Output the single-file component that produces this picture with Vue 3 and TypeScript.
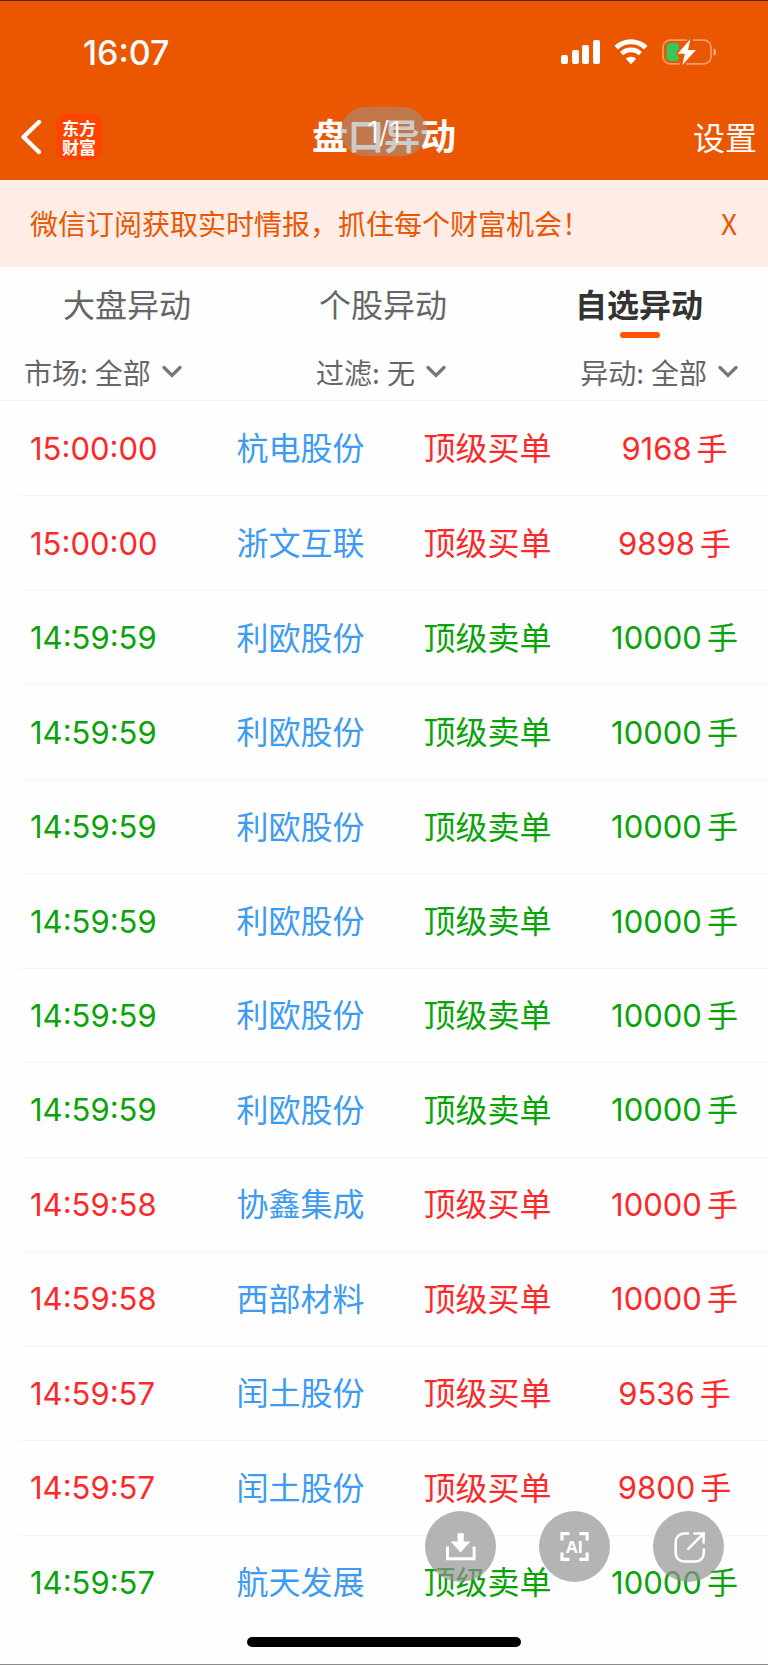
<script setup lang="ts">
import { ref } from 'vue'

type Side = 'buy' | 'sell'

interface Movement {
  time: string
  name: string
  side: Side
  volume: number
}

interface Filter {
  id: string
  label: string
  value: string
}

const tabs: string[] = ['大盘异动', '个股异动', '自选异动']
const activeTab = ref(2)
const bannerOpen = ref(true)

const filters = ref<Filter[]>([
  { id: 'market', label: '市场:', value: '全部' },
  { id: 'screen', label: '过滤:', value: '无' },
  { id: 'kind', label: '异动:', value: '全部' },
])

const sideLabel: Record<Side, string> = { buy: '顶级买单', sell: '顶级卖单' }

const movements: Movement[] = [
  { time: '15:00:00', name: '杭电股份', side: 'buy', volume: 9168 },
  { time: '15:00:00', name: '浙文互联', side: 'buy', volume: 9898 },
  { time: '14:59:59', name: '利欧股份', side: 'sell', volume: 10000 },
  { time: '14:59:59', name: '利欧股份', side: 'sell', volume: 10000 },
  { time: '14:59:59', name: '利欧股份', side: 'sell', volume: 10000 },
  { time: '14:59:59', name: '利欧股份', side: 'sell', volume: 10000 },
  { time: '14:59:59', name: '利欧股份', side: 'sell', volume: 10000 },
  { time: '14:59:59', name: '利欧股份', side: 'sell', volume: 10000 },
  { time: '14:59:58', name: '协鑫集成', side: 'buy', volume: 10000 },
  { time: '14:59:58', name: '西部材料', side: 'buy', volume: 10000 },
  { time: '14:59:57', name: '闰土股份', side: 'buy', volume: 9536 },
  { time: '14:59:57', name: '闰土股份', side: 'buy', volume: 9800 },
  { time: '14:59:57', name: '航天发展', side: 'sell', volume: 10000 },
]
</script>

<template>
  <div class="screen">
    <header class="top">
      <div class="status">
        <span class="clock">16:07</span>
        <div class="status-icons">
          <svg width="40" height="26" viewBox="0 0 40 26" fill="#fff" aria-hidden="true">
            <rect x="0" y="16" width="7" height="9" rx="2" />
            <rect x="11" y="11" width="7" height="14" rx="2" />
            <rect x="21" y="6" width="7" height="19" rx="2" />
            <rect x="32" y="1" width="7" height="24" rx="2" />
          </svg>
          <svg width="34" height="26" viewBox="0 0 34 26" fill="none" aria-hidden="true">
            <path d="M2.2 8.6a21.6 21.6 0 0 1 29.6 0" stroke="#fff" stroke-width="5" />
            <path d="M7.6 14.6a13.6 13.6 0 0 1 18.8 0" stroke="#fff" stroke-width="4.6" />
            <path d="M17 25.2l-5.2-5.4a7.6 7.6 0 0 1 10.4 0z" fill="#fff" />
          </svg>
          <svg width="55" height="28" viewBox="0 0 55 28" fill="none" aria-hidden="true">
            <path
              d="M26 2.2H9a7 7 0 0 0-7 7v9.6a7 7 0 0 0 7 7h10M32 2.2h11a7 7 0 0 1 7 7v9.6a7 7 0 0 1-7 7H25"
              stroke="#fff" stroke-opacity=".42" stroke-width="1.7"
            />
            <path d="M52.5 10.4a3.8 3.8 0 0 1 0 7.4z" fill="#fff" fill-opacity=".5" />
            <path d="M9.5 5h5q3.5 0 3.500 3v3l-2.600 3q-1 2.500 1.600 3.500 1.600.5 1 3-.7 2.500-3.500 2.500h-5q-4 0-4-4V9q0-4 4-4z" fill="#34c759" />
            <path d="M29.5 1L16.5 15.8h7.4L21.3 27l13.7-15h-8z" fill="#fff" />
          </svg>
        </div>
      </div>

      <nav class="nav">
        <div class="nav-left">
          <button class="back" type="button" aria-label="返回">
            <svg width="22" height="36" viewBox="0 0 22 36" fill="none" aria-hidden="true">
              <path d="M19 3L3.5 18 19 33" stroke="#fff" stroke-width="4.4" stroke-linecap="round" stroke-linejoin="round" />
            </svg>
          </button>
          <a class="logo" href="#">东方<br />财富</a>
        </div>
        <h1 class="title">盘口异动<span class="pager">1/1</span></h1>
        <button class="settings" type="button">设置</button>
      </nav>
    </header>

    <div v-if="bannerOpen" class="banner">
      <a class="banner-text" href="#">微信订阅获取实时情报，抓住每个财富机会！</a>
      <button class="close" type="button" @click="bannerOpen = false">X</button>
    </div>

    <div class="tabs" role="tablist">
      <button
        v-for="(tab, i) in tabs"
        :key="tab"
        type="button"
        role="tab"
        class="tab"
        :class="{ active: i === activeTab }"
        :aria-selected="i === activeTab"
        @click="activeTab = i"
      >
        {{ tab }}
      </button>
    </div>

    <div class="filters">
      <div v-for="f in filters" :key="f.id" class="filter">
        <label :for="f.id">{{ f.label }}</label>
        <select :id="f.id" v-model="f.value">
          <option :value="f.value">{{ f.value }}</option>
        </select>
        <svg width="20" height="14" viewBox="0 0 20 14" fill="none" aria-hidden="true">
          <path d="M2 2.5l8 8 8-8" stroke="#777" stroke-width="3.2" stroke-linecap="round" />
        </svg>
      </div>
    </div>

    <table class="list">
      <tbody>
        <tr v-for="(m, i) in movements" :key="i" :class="m.side">
          <td class="time">{{ m.time }}</td>
          <td class="name">{{ m.name }}</td>
          <td class="kind">{{ sideLabel[m.side] }}</td>
          <td class="volume">{{ m.volume }}<span class="unit">手</span></td>
        </tr>
      </tbody>
    </table>

    <footer class="bottom"><span class="home"></span></footer>

    <div class="actions">
      <button type="button" aria-label="下载">
        <svg width="71" height="71" viewBox="0 0 72 72" fill="none" aria-hidden="true">
          <path d="M33 22.5h6.3V31H46L36.1 42 26 31h7z" fill="#fff" />
          <path d="M22.8 36v12.5h27V36" stroke="#fff" stroke-width="3" />
        </svg>
      </button>
      <button type="button" aria-label="AI">
        <svg width="71" height="71" viewBox="0 0 72 72" fill="none" aria-hidden="true">
          <path d="M23.3 30v-7H31M41 23h7.8v7M48.8 42v7H41M31 49h-7.700v-7" stroke="#fff" stroke-width="3.2" />
          <text x="36" y="42.5" text-anchor="middle" class="ai">AI</text>
        </svg>
      </button>
      <button type="button" aria-label="分享">
        <svg width="71" height="71" viewBox="0 0 72 72" fill="none" stroke="#fff" stroke-width="2.6" aria-hidden="true">
          <path d="M36.5 22.8H31.5a8.5 8.5 0 0 0-8.5 8.5v11.5a8.5 8.5 0 0 0 8.5 8.5h11.5a8.5 8.5 0 0 0 8.5-8.5V38" />
          <path d="M41 22.8h10.300V33M50.8 23.3L35 39.2" />
        </svg>
      </button>
    </div>
  </div>
</template>

<style>
body {
  margin: 0;
  background: #fefefe;
}
</style>

<style scoped>
.screen {
  position: relative;
  box-sizing: border-box;
  display: flex;
  flex-direction: column;
  min-height: 100vh;
  border-top: 1px solid #54260c;
  border-bottom: 1px solid #8c8c8c;
  background: #fefefe;
  color: #666;
  font-family: Inter, "Noto Sans CJK SC", sans-serif;
  font-size: 32px;
}

button,
select {
  margin: 0;
  padding: 0;
  border: 0;
  background: none;
  color: inherit;
  font: inherit;
  cursor: pointer;
}

a {
  color: inherit;
  text-decoration: none;
}

svg {
  display: block;
}

.top {
  background: #eb5601;
  color: #fff;
}

.status {
  display: flex;
  align-items: center;
  justify-content: space-between;
  height: 92px;
  padding: 10px 52px 0 83px;
  box-sizing: border-box;
}

.clock {
  font-size: 34px;
  font-weight: 500;
}

.status-icons {
  display: flex;
  align-items: center;
  gap: 13px;
}

.nav {
  display: grid;
  grid-template-columns: 1fr auto 1fr;
  align-items: center;
  height: 87px;
  padding: 0 11px;
}

.nav-left {
  display: flex;
  align-items: center;
  gap: 14px;
  padding-left: 9px;
}

.logo {
  box-sizing: border-box;
  width: 46px;
  height: 46px;
  padding-top: 4px;
  border-radius: 9px;
  background: #ff4400;
  font-family: "Noto Sans CJK SC", sans-serif;
  font-size: 17px;
  font-weight: 700;
  line-height: 19px;
  text-align: center;
}

.title {
  position: relative;
  margin: 0;
  font-size: 36px;
  font-weight: 700;
  line-height: 48px;
}

.pager {
  position: absolute;
  top: -6px;
  left: 50%;
  box-sizing: border-box;
  width: 86px;
  height: 49px;
  margin-left: -43px;
  padding-top: 2px;
  border-radius: 25px;
  background: rgba(153, 153, 153, 0.5);
  font-size: 30px;
  font-weight: 300;
  line-height: 47px;
  text-align: center;
}

.settings {
  justify-self: end;
  padding-bottom: 2px;
}

.banner {
  display: flex;
  align-items: center;
  justify-content: space-between;
  box-sizing: border-box;
  height: 87px;
  padding: 0 31px 2px 30px;
  background: #fdede6;
  color: #eb5601;
  font-family: "Noto Sans CJK SC", sans-serif;
  font-size: 28px;
}

.tabs {
  display: grid;
  grid-template-columns: repeat(3, 1fr);
  height: 76px;
}

.tab {
  position: relative;
  padding: 0 2px 4px 0;
}

.tab.active {
  color: #333;
  font-weight: 700;
}

.tab.active::after {
  content: "";
  position: absolute;
  bottom: 5px;
  left: 50%;
  width: 40px;
  height: 6px;
  margin-left: -20px;
  border-radius: 3px;
  background: #ff5500;
}

.filters {
  display: flex;
  align-items: center;
  justify-content: space-between;
  height: 57px;
  padding: 0 30px 0 24px;
  border-bottom: 1px solid #f5f5f5;
  font-family: "Noto Sans CJK SC", sans-serif;
  font-size: 28px;
}

.filter {
  display: flex;
  align-items: center;
}

.filter select {
  margin: 0 10px 0 7px;
  appearance: none;
}

.list {
  flex: 1;
  display: flex;
  flex-direction: column;
}

.list tbody {
  flex: 1;
  display: grid;
  grid-auto-rows: minmax(64px, 1fr);
  padding-left: 20px;
}

.list tr {
  display: grid;
  grid-template-columns: repeat(4, 1fr);
  align-items: center;
}

.list tr + tr {
  border-top: 1px solid #f5f5f5;
}

.list td {
  padding: 0 0 4px;
  text-align: center;
  white-space: nowrap;
}

.list .time {
  padding: 0 0 0 10px;
  font-size: 31px;
  text-align: left;
}

.list .name {
  color: #3d9bf2;
}

.list .volume {
  font-size: 31px;
}

.unit {
  margin-left: 5px;
}

.buy {
  color: #fb2929;
}

.sell {
  color: #0aa30a;
}

.bottom {
  display: flex;
  justify-content: center;
  height: 35px;
}

.home {
  width: 274px;
  height: 10px;
  margin-top: 8px;
  border-radius: 5px;
  background: #000;
}

.actions {
  position: absolute;
  right: 44px;
  bottom: 82px;
  display: flex;
  gap: 43px;
}

.actions button {
  width: 71px;
  height: 71px;
  border-radius: 50%;
  background: rgba(144, 144, 144, 0.68);
}

.ai {
  fill: #fff;
  font-family: "Open Sans", sans-serif;
  font-size: 17px;
  font-weight: 700;
}
</style>
